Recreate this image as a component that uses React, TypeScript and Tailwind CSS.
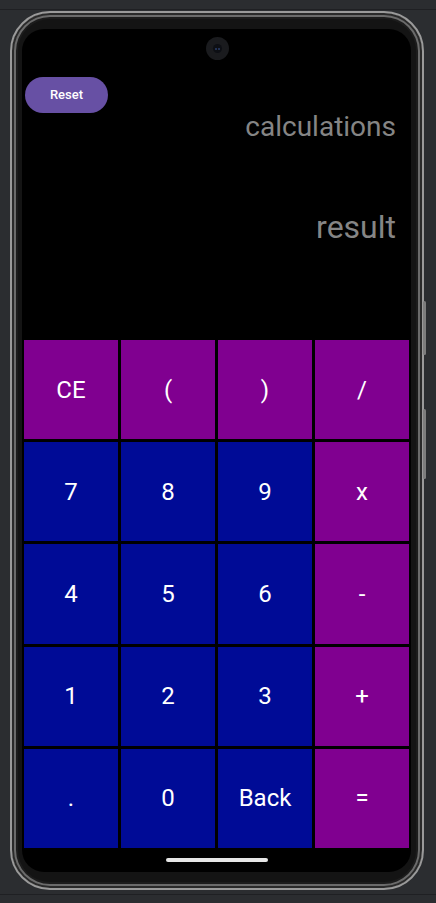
import React from "react";

type Key = { label: string; op?: boolean };

const keys: Key[] = [
  { label: "CE", op: true },
  { label: "(", op: true },
  { label: ")", op: true },
  { label: "/", op: true },
  { label: "7" },
  { label: "8" },
  { label: "9" },
  { label: "x", op: true },
  { label: "4" },
  { label: "5" },
  { label: "6" },
  { label: "-", op: true },
  { label: "1" },
  { label: "2" },
  { label: "3" },
  { label: "+", op: true },
  { label: "." },
  { label: "0" },
  { label: "Back" },
  { label: "=", op: true },
];

function KeyButton({ k }: { k: Key }) {
  return (
    <button
      type="button"
      className={
        "flex items-center justify-center text-[24px] font-normal leading-none text-white " +
        (k.op ? "bg-[#800090]" : "bg-[#000b96]")
      }
    >
      {k.label}
    </button>
  );
}

export default function App() {
  return (
    <div className="relative h-[903px] w-[436px] overflow-hidden bg-[#2b2d30] font-['Roboto','Noto_Sans',sans-serif]">
      {/* window strip */}
      <div className="h-[10px] border-b border-[#1f2023]" />

      {/* phone frame */}
      <div className="relative ml-[10px] mt-px h-[879px] w-[414px] rounded-[40px] border-2 border-[#9a9a9a] bg-[#141414] pb-[16px] pl-[10px] pr-[11px] pt-[16px] shadow-[inset_0_0_0_2px_#2a2a2a,inset_0_0_0_4px_#6b6b6b,inset_0_0_0_6px_#1c1c1c]">
        {/* side keys */}
        <span className="absolute -right-[4px] top-[288px] h-[54px] w-[3px] rounded-sm bg-[#7d7d7d]" />
        <span className="absolute -right-[4px] top-[396px] h-[70px] w-[3px] rounded-sm bg-[#7d7d7d]" />

        {/* screen */}
        <div className="relative flex h-[843px] w-[389px] flex-col overflow-hidden rounded-[22px] bg-black">
          {/* punch-hole camera */}
          <div className="absolute left-[184px] top-[8px] flex h-[23px] w-[23px] items-center justify-center rounded-full bg-[#1a1b1e]">
            <div className="flex h-[9px] w-[9px] items-center justify-center gap-px rounded-full bg-[#0d0f14]">
              <span className="h-[2px] w-[2px] rounded-full bg-[#2b3f6a]" />
              <span className="h-[2px] w-[2px] rounded-full bg-[#2b3f6a]" />
            </div>
          </div>

          {/* display area */}
          <div className="pl-[3px] pt-[48px]">
            <button
              type="button"
              className="flex h-[36px] w-[83px] items-center justify-center rounded-full bg-[#6750a4] text-[13px] font-medium text-white"
            >
              Reset
            </button>
          </div>
          <div className="pr-[15px] text-right text-[28px] leading-[28px] text-[#858585]">
            calculations
          </div>
          <div className="mt-[69px] pr-[15px] text-right text-[32px] leading-[35px] text-[#858585]">
            result
          </div>

          {/* keypad */}
          <div className="mt-auto grid h-[508px] grid-cols-4 grid-rows-5 gap-[3px] px-[2px]">
            {keys.map((k) => (
              <KeyButton key={k.label} k={k} />
            ))}
          </div>

          {/* nav bar */}
          <div className="flex h-[24px] items-center justify-center">
            <div className="h-[4px] w-[102px] rounded-full bg-[#e6e6e6]" />
          </div>
        </div>
      </div>

      <div className="mt-[4px] border-t border-[#1f2023]" />
    </div>
  );
}
